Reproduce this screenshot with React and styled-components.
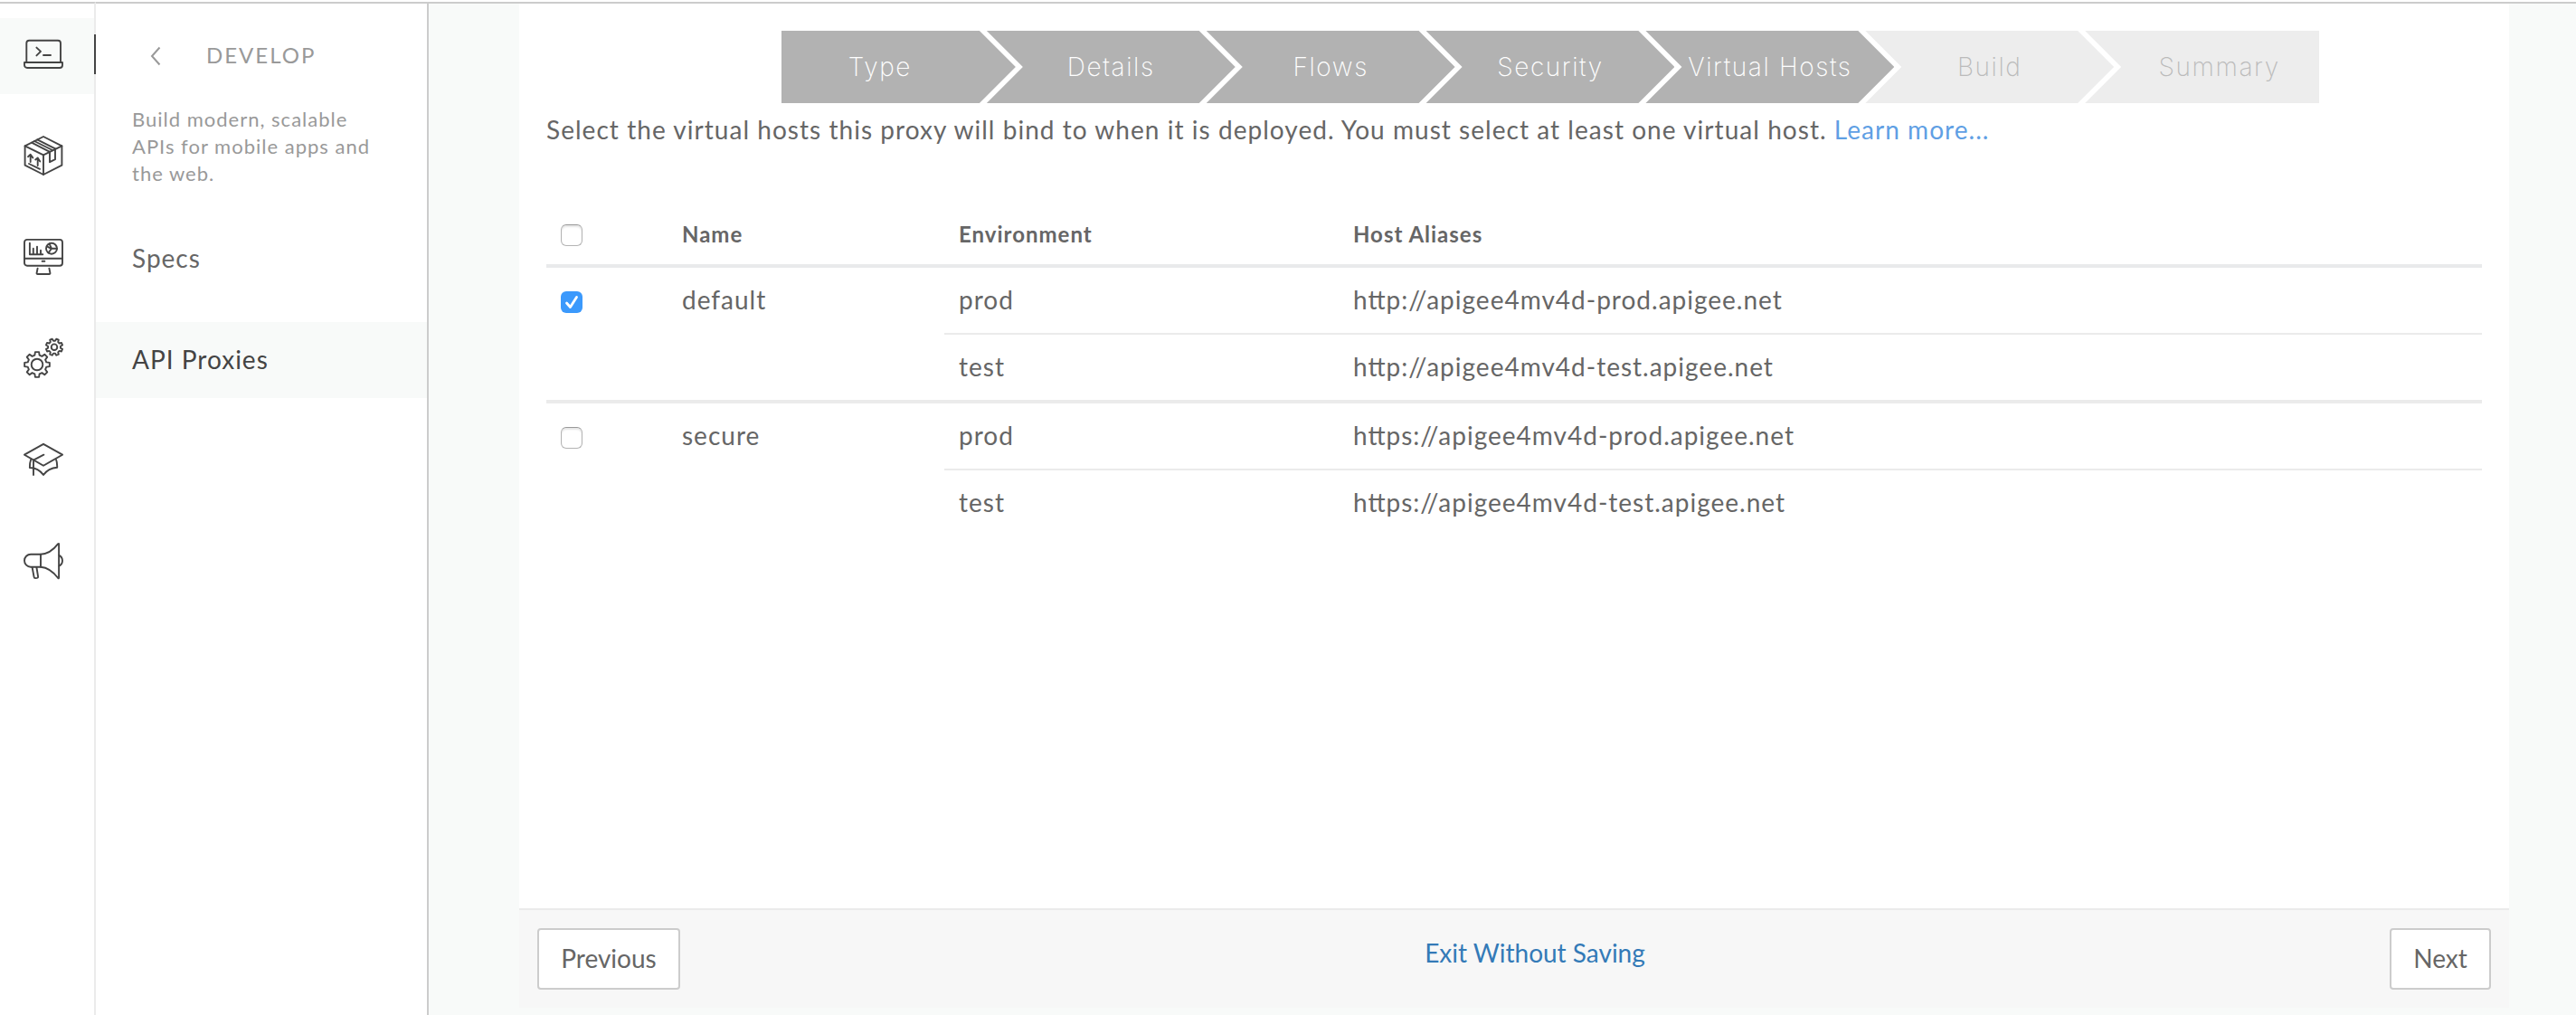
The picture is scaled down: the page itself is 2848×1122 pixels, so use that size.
import React, { useState } from "react";
import styled, { createGlobalStyle, css } from "styled-components";

const GlobalStyle = createGlobalStyle`
  *, *::before, *::after { box-sizing: border-box; }
  body {
    margin: 0;
    background: #f8faf9;
    font-family: Lato, "Liberation Sans", sans-serif;
    font-size: 28px;
    line-height: 40px;
    letter-spacing: 1px;
    color: #666;
    overflow: hidden;
  }
`;

const Page = styled.div`
  display: flex;
  height: 1122px;
  border-top: 2px solid #fff;
`;

const Rail = styled.nav`
  display: flex;
  flex-direction: column;
  gap: 28px;
  width: 106px;
  padding-top: 16px;
  background: #fff;
  border-top: 2px solid #ccc;
  border-right: 2px solid #ebebeb;
`;

const RailItem = styled.a`
  position: relative;
  display: block;
  height: 84px;
  padding: 16px 0 0 24px;
  background: ${(p) => (p.$active ? "#f8faf9" : "transparent")};
  ${(p) =>
    p.$active &&
    css`
      &::after {
        content: "";
        position: absolute;
        top: 18px;
        right: -2px;
        width: 2px;
        height: 44px;
        background: #444;
      }
    `}
`;

const RailSvg = styled.svg`
  display: block;
  width: 48px;
  height: 48px;
  fill: none;
  stroke: #444;
  stroke-width: 1.9;
  stroke-linejoin: round;
  stroke-linecap: round;
`;

const Panel = styled.aside`
  width: 368px;
  background: #fff;
  border-top: 2px solid #ccc;
  border-right: 2px solid #ccc;
`;

const PanelHeader = styled.div`
  display: flex;
  align-items: center;
  height: 40px;
  margin-top: 37px;
  padding-left: 60px;
  font-size: 24px;
  letter-spacing: 2px;
  color: #999;
`;

const BackArrow = styled.svg`
  width: 12px;
  height: 22px;
  margin-right: 50px;
  margin-top: 2px;
  fill: none;
  stroke: #999;
  stroke-width: 2;
`;

const PanelText = styled.p`
  width: 280px;
  margin: 36px 0 37px 40px;
  font-size: 22px;
  line-height: 30px;
  color: #999;
`;

const PanelLink = styled.a`
  display: flex;
  align-items: center;
  height: 84px;
  margin-bottom: 28px;
  padding: 0 0 2px 40px;
  color: ${(p) => (p.$active ? "#444" : "#666")};
  background: ${(p) => (p.$active ? "#f8faf9" : "transparent")};
`;

const Main = styled.main`
  flex: 1;
  padding: 0 74px 8px 100px;
  border-top: 2px solid #ccc;
`;

const Sheet = styled.section`
  display: flex;
  flex-direction: column;
  height: 1110px;
  background: #fff;
`;

const Content = styled.div`
  flex: 1;
  padding: 30px 30px 0;
`;

const Steps = styled.ol`
  display: flex;
  width: 1700px;
  height: 80px;
  margin: 0 0 0 260px;
  padding: 0;
  list-style: none;
`;

const Step = styled.li`
  display: flex;
  align-items: center;
  justify-content: center;
  width: 274.86px;
  flex: none;
  font-family: Inter, "Liberation Sans", sans-serif;
  font-weight: 250;
  letter-spacing: 1.6px;
  white-space: nowrap;
  color: ${(p) => (p.$done ? "#fff" : "#bbb")};
  background: ${(p) => (p.$done ? "#b2b2b2" : "#ededed")};
  clip-path: polygon(0 0, calc(100% - 40px) 0, 100% 50%, calc(100% - 40px) 100%, 0 100%, 40px 50%);

  & + & { margin-left: -32px; }
  &:first-child {
    width: 258.86px;
    padding-right: 41px;
    clip-path: polygon(0 0, calc(100% - 40px) 0, 100% 50%, calc(100% - 40px) 100%, 0 100%);
  }
  &:last-child {
    width: 258.86px;
    padding-left: 38px;
    clip-path: polygon(0 0, 100% 0, 100% 100%, 0 100%, 40px 50%);
  }
`;

const Intro = styled.p`
  margin: 9px 0 61px;
  letter-spacing: 1.04px;
`;

const TextLink = styled.a`
  color: #5f9fe4;
  text-decoration: none;
`;

const Table = styled.div`
  display: flex;
  flex-direction: column;
`;

const HeadRow = styled.div`
  display: grid;
  grid-template-columns: 134px 306px 436px 1fr;
  align-items: center;
  height: 72px;
  padding: 2px 16px 0;
  font-size: 24px;
  font-weight: 700;
  border-bottom: 4px solid #e9eaeb;
`;

const HostGroup = styled.div`
  display: grid;
  grid-template-columns: 134px 306px 1fr;
  & + & { border-top: 4px solid #ebebeb; }
`;

const Cell = styled.div`
  display: flex;
  align-items: center;
  height: 72px;
  padding: 0 0 2px 16px;
`;

const EnvRow = styled.div`
  display: grid;
  grid-template-columns: 436px 1fr;
  & + & { border-top: 2px solid #ebebeb; }
`;

const Alias = styled(Cell)`
  font-feature-settings: "liga" 1;
`;

const CheckButton = styled.button`
  display: flex;
  align-items: center;
  justify-content: center;
  width: 24px;
  height: 24px;
  margin-top: ${(p) => (p.$head ? "2px" : "6px")};
  padding: 0;
  border-radius: 6px;
  border: ${(p) => (p.$on ? "none" : "1.5px solid #b4b4b4")};
  border-top-color: #999;
  background: ${(p) => (p.$on ? "#3b99fc" : "#fff")};
  box-shadow: ${(p) => (p.$on ? "none" : "inset 0 2px 2px rgba(0, 0, 0, 0.1)")};
`;

const CheckMark = styled.svg`
  width: 24px;
  height: 24px;
  fill: none;
  stroke: #fff;
  stroke-width: 2.8;
  stroke-linecap: round;
  stroke-linejoin: round;
`;

const Footer = styled.footer`
  display: flex;
  justify-content: space-between;
  align-items: flex-start;
  height: 110px;
  padding: 20px;
  background: #f7f7f7;
  border-top: 2px solid #ebebeb;
  letter-spacing: 0;
`;

const Button = styled.button`
  width: ${(p) => p.$width}px;
  height: 68px;
  padding: 0 0 2px;
  font: inherit;
  color: #666;
  background: #fff;
  border: 2px solid #ccc;
  border-radius: 4px;
`;

const ExitLink = styled.a`
  margin-top: 7px;
  color: #337ab7;
`;

function gear(cx, cy, outer, root, offset) {
  const points = [];
  const teeth = 8;
  for (let i = 0; i < teeth; i++) {
    const mid = ((i + offset) / teeth) * Math.PI * 2 - Math.PI / 2;
    [
      [-0.25, root],
      [-0.15, outer],
      [0.15, outer],
      [0.25, root],
    ].forEach(([d, r]) => {
      const a = mid + d;
      points.push(`${(cx + r * Math.cos(a)).toFixed(2)} ${(cy + r * Math.sin(a)).toFixed(2)}`);
    });
  }
  return `M${points.join("L")}Z`;
}

const LaptopIcon = () => (
  <RailSvg viewBox="0 0 48 48">
    <path d="M5.3 32.8V11.8a3 3 0 0 1 3-3H40a3 3 0 0 1 3 3v21" />
    <path d="M3 33h42v3a3 3 0 0 1-3 3H6a3 3 0 0 1-3-3z" />
    <path d="M16.4 16.6l4.6 4.3-4.6 4.5M24 25h8" />
  </RailSvg>
);

const BoxIcon = () => (
  <RailSvg viewBox="0 0 48 48">
    <path d="M24 3L44.4 13.3v21.4L24 45 3.6 34.7V13.3z" />
    <path d="M3.6 13.3L24 23.4l20.4-10.1M24 23.4V45" />
    <path d="M11 9.7l20 10.1M14 8l20 10M17.3 6.3L37 16.3M31 19.8v11.4l6-3V16.3" />
    <path d="M9.7 23.2V31M7 25.2l2.7-2.4 2.6 3.6M17.7 26.8V35M15.2 28.4l2.5-2 2.6 4M8 33l12 5.8" />
  </RailSvg>
);

const MonitorIcon = () => (
  <RailSvg viewBox="0 0 48 48">
    <rect x="3" y="4.9" width="42" height="28.8" rx="3" />
    <path d="M3 25.7h42M22.6 28.8h2.8" />
    <path d="M8.9 8.8v12.5h14.4M12.8 14.8v6M17 12.6v8M21 16.8v4" />
    <circle cx="33" cy="14.7" r="6" />
    <path d="M30.6 9.6l2.4 5.1h6M33 14.7l-3.6 4.9M28 12.4l4.6 2.4" />
    <path d="M17.6 36.6l-1 5.2q-.2 1.2 1 1.2h12.8q1.2 0 1-1.2l-1-5.2" />
  </RailSvg>
);

const GearsIcon = () => (
  <RailSvg viewBox="0 0 48 48">
    <path d={gear(17, 31, 14, 10.6, 0)} />
    <circle cx="17" cy="31" r="6.3" />
    <path d={gear(36, 11.7, 9.3, 7, 0.5)} />
    <circle cx="36" cy="11.7" r="3.3" />
  </RailSvg>
);

const CapIcon = () => (
  <RailSvg viewBox="0 0 48 48">
    <path d="M24 6.8L45 18.7 24 30.7 3 18.7z" />
    <path d="M24.4 18.7L13 24.7v16.4" />
    <path d="M10.2 24q-1.4 3.6-1.3 9Q18.5 33.2 24 41q5.500-7.800 15.200-8.300.2-5.200-1.200-8.700" />
  </RailSvg>
);

const MegaphoneIcon = () => (
  <RailSvg viewBox="0 0 48 48">
    <path d="M21 16.700H10a7 7 0 0 0 0 14h11z" />
    <path d="M21 16.700Q31.500 16.500 40.200 5.200q.9-.8.9.4v37q0 1.200-.9.400Q31.500 31.500 21 30.700" />
    <path d="M41.400 17.800q3.600 2 3.600 5.900t-3.600 5.900" />
    <path d="M11.600 31l2 10.800q.2 1.400 1.600 1.300l1.800-.2q1.300-.2 1.100-1.500L16.400 31" />
  </RailSvg>
);

const railIcons = [LaptopIcon, BoxIcon, MonitorIcon, GearsIcon, CapIcon, MegaphoneIcon];

const steps = ["Type", "Details", "Flows", "Security", "Virtual Hosts", "Build", "Summary"];
const currentStep = 4;

const hosts = [
  {
    name: "default",
    environments: [
      ["prod", "http://apigee4mv4d-prod.apigee.net"],
      ["test", "http://apigee4mv4d-test.apigee.net"],
    ],
  },
  {
    name: "secure",
    environments: [
      ["prod", "https://apigee4mv4d-prod.apigee.net"],
      ["test", "https://apigee4mv4d-test.apigee.net"],
    ],
  },
];

function Checkbox({ checked, head, onToggle }) {
  return (
    <CheckButton type="button" role="checkbox" aria-checked={checked} $on={checked} $head={head} onClick={onToggle}>
      {checked && (
        <CheckMark viewBox="0 0 24 24">
          <path d="M6.500 13l4 4.500 7-11" />
        </CheckMark>
      )}
    </CheckButton>
  );
}

export default function App() {
  const [selected, setSelected] = useState({ default: true, secure: false });
  const all = hosts.every((h) => selected[h.name]);
  const toggle = (name) => setSelected((s) => ({ ...s, [name]: !s[name] }));
  const toggleAll = () => setSelected(Object.fromEntries(hosts.map((h) => [h.name, !all])));

  return (
    <>
      <GlobalStyle />
      <Page>
        <Rail>
          {railIcons.map((Icon, i) => (
            <RailItem key={i} $active={i === 0}>
              <Icon />
            </RailItem>
          ))}
        </Rail>
        <Panel>
          <PanelHeader>
            <BackArrow viewBox="0 0 12 22">
              <path d="M10.500 1.500L2 11l8.500 9.500" />
            </BackArrow>
            DEVELOP
          </PanelHeader>
          <PanelText>Build modern, scalable APIs for mobile apps and the web.</PanelText>
          <PanelLink>Specs</PanelLink>
          <PanelLink $active>API Proxies</PanelLink>
        </Panel>
        <Main>
          <Sheet>
            <Content>
              <Steps>
                {steps.map((label, i) => (
                  <Step key={label} $done={i <= currentStep}>
                    {label}
                  </Step>
                ))}
              </Steps>
              <Intro>
                Select the virtual hosts this proxy will bind to when it is deployed. You must select at least one
                virtual host. <TextLink>Learn more...</TextLink>
              </Intro>
              <Table>
                <HeadRow>
                  <Checkbox head checked={all} onToggle={toggleAll} />
                  <span>Name</span>
                  <span>Environment</span>
                  <span>Host Aliases</span>
                </HeadRow>
                {hosts.map((host) => (
                  <HostGroup key={host.name}>
                    <Cell>
                      <Checkbox checked={selected[host.name]} onToggle={() => toggle(host.name)} />
                    </Cell>
                    <Cell>{host.name}</Cell>
                    <div>
                      {host.environments.map(([env, alias]) => (
                        <EnvRow key={env}>
                          <Cell>{env}</Cell>
                          <Alias>{alias}</Alias>
                        </EnvRow>
                      ))}
                    </div>
                  </HostGroup>
                ))}
              </Table>
            </Content>
            <Footer>
              <Button type="button" $width={158}>
                Previous
              </Button>
              <ExitLink>Exit Without Saving</ExitLink>
              <Button type="button" $width={112}>
                Next
              </Button>
            </Footer>
          </Sheet>
        </Main>
      </Page>
    </>
  );
}
